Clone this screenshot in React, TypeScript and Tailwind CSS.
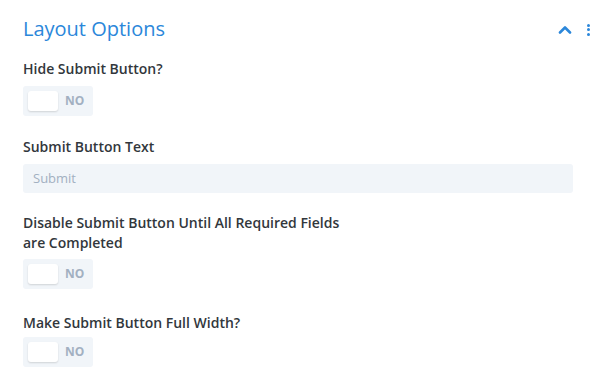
import React from "react";

function Toggle() {
  return (
    <div className="flex h-[30px] w-[70px] items-center rounded-[3px] bg-[#f1f5f9] pl-[5px]">
      <div className="h-[20px] w-[30px] rounded-[3px] bg-white shadow-[0_1px_2px_rgba(0,0,0,0.14)]" />
      <span className="ml-[7px] text-[12px] font-bold leading-none text-[#a2b0c1]">NO</span>
    </div>
  );
}

export default function App() {
  return (
    <div
      className="min-h-[387px] w-[599px] bg-white pl-[23px] pr-[26px] pt-[15px]"
      style={{ fontFamily: '"Open Sans", sans-serif' }}
    >
      <div className="flex items-center justify-between">
        <h2 className="text-[20px] font-normal leading-[28px] text-[#2b87da]">Layout Options</h2>
        <div className="mr-[-17px] flex items-center gap-[15px] pt-[1px]">
          <svg width="14" height="9" viewBox="0 0 14 9" fill="none">
            <path d="M2 7.5L7 2.5L12 7.5" stroke="#2b87da" strokeWidth="2.6" strokeLinecap="round" strokeLinejoin="round" />
          </svg>
          <div className="flex flex-col gap-[1.5px]">
            <div className="h-[3px] w-[3px] rounded-full bg-[#2b87da]" />
            <div className="h-[3px] w-[3px] rounded-full bg-[#2b87da]" />
            <div className="h-[3px] w-[3px] rounded-full bg-[#2b87da]" />
          </div>
        </div>
      </div>

      <div className="mt-[16px]">
        <div className="text-[14px] font-semibold leading-[20px] text-[#32373c]">Hide Submit Button?</div>
        <div className="mt-[7px]"><Toggle /></div>
      </div>

      <div className="mt-[21px]">
        <div className="text-[14px] font-semibold leading-[20px] text-[#32373c]">Submit Button Text</div>
        <div className="mt-[7px] flex h-[29px] w-[550px] items-center rounded-[3px] bg-[#f1f5f9] px-[10px] text-[13px] text-[#a2b0c1]">
          Submit
        </div>
      </div>

      <div className="mt-[20px]">
        <div className="w-[330px] text-[14px] font-semibold leading-[20px] text-[#32373c]">
          Disable Submit Button Until All Required Fields are Completed
        </div>
        <div className="mt-[6px]"><Toggle /></div>
      </div>

      <div className="mt-[24px]">
        <div className="text-[14px] font-semibold leading-[20px] text-[#32373c]">Make Submit Button Full Width?</div>
        <div className="mt-[4px]"><Toggle /></div>
      </div>
    </div>
  );
}
